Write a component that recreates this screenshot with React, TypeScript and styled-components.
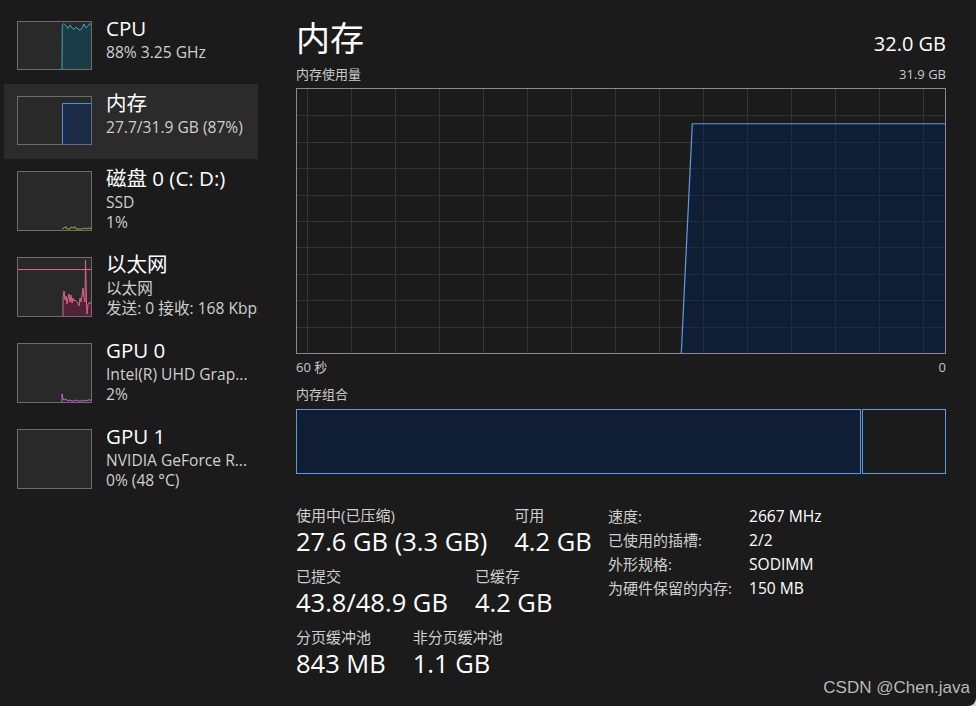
import React from "react";
import styled, { createGlobalStyle } from "styled-components";

const FONT = `"Open Sans", "Noto Sans CJK SC", sans-serif`;

const Global = createGlobalStyle`
  html, body { margin: 0; padding: 0; background: #d4d4d4; }
  body { font-family: ${FONT}; }
  * { box-sizing: border-box; }
`;

const Window = styled.div`
  position: relative;
  width: 976px;
  height: 706px;
  background: #1b1b1b;
  border-bottom-right-radius: 8px;
  overflow: hidden;
  display: grid;
  grid-template-columns: 296px 650px;
  font-family: ${FONT};
  color: #fff;
`;

const Sidebar = styled.nav`
  padding: 9px 38px 0 4px;
  display: flex;
  flex-direction: column;
`;

const NavRow = styled.div<{ $tall?: boolean; $active?: boolean }>`
  height: ${(p) => (p.$tall ? 86 : 75)}px;
  padding-left: 13px;
  display: flex;
  align-items: flex-start;
  gap: 14px;
  background: ${(p) => (p.$active ? "#2b2b2b" : "transparent")};
`;

const Thumb = styled.div<{ $tall?: boolean }>`
  flex: 0 0 75px;
  height: ${(p) => (p.$tall ? 60 : 49)}px;
  margin-top: 12px;
  border: 1px solid #6c6c6c;
  background: #292929;
  svg {
    display: block;
  }
`;

const NavText = styled.div`
  padding-top: 5px;
  width: 157px;
  overflow: hidden;
  white-space: nowrap;
`;

const NavTitle = styled.div`
  font-size: 20.5px;
  line-height: 28px;
  color: #fff;
`;

const NavSub = styled.div`
  font-size: 15.6px;
  line-height: 20px;
  color: #cfcfcf;
`;

const Main = styled.main`
  padding-top: 16px;
  display: flex;
  flex-direction: column;
`;

const HeaderRow = styled.div`
  height: 44px;
  display: flex;
  justify-content: space-between;
  align-items: baseline;
`;

const PageTitle = styled.h1`
  margin: 0;
  font-size: 34px;
  line-height: 44px;
  font-weight: 400;
`;

const Total = styled.div`
  font-size: 20px;
  line-height: 24px;
`;

const CaptionRow = styled.div<{ $mt: number }>`
  margin-top: ${(p) => p.$mt}px;
  display: flex;
  justify-content: space-between;
  font-size: 13px;
  line-height: 16px;
  color: #c9c9c9;
`;

const Graph = styled.div`
  margin-top: 6px;
  height: 266px;
  border: 1px solid #8a8a8a;
  svg {
    display: block;
  }
`;

const CompBar = styled.div`
  margin-top: 7px;
  height: 65px;
  display: flex;
`;

const Seg = styled.div<{ $fill?: boolean; $grow?: boolean }>`
  height: 100%;
  flex: ${(p) => (p.$grow ? "1 1 auto" : "0 0 auto")};
  border: 1px solid #5b9be6;
  background: ${(p) => (p.$fill ? "#0f1e35" : "transparent")};
`;

const SegGap = styled.div`
  flex: 0 0 1px;
`;

const Stats = styled.div`
  margin-top: 30px;
  display: grid;
  grid-template-columns: 312px 1fr;
  align-items: start;
`;

const StatCol = styled.div`
  padding-top: 0.5px;
  display: flex;
  flex-direction: column;
  gap: 9px;
`;

const StatRow = styled.div`
  display: flex;
  gap: 27px;
`;

const Stat = styled.div`
  display: flex;
  flex-direction: column;
`;

const StatLabel = styled.div`
  font-size: 15px;
  line-height: 20px;
  color: #cfcfcf;
`;

const StatValue = styled.div`
  font-size: 25.5px;
  line-height: 32px;
  color: #fff;
`;

const Specs = styled.dl`
  margin: 0;
  display: grid;
  grid-template-columns: 141px 1fr;
  grid-auto-rows: 24px;
  align-content: start;
  font-size: 15px;
  line-height: 24px;
`;

const SpecKey = styled.dt`
  color: #cfcfcf;
`;

const SpecVal = styled.dd`
  margin: 0;
  font-size: 15.6px;
  color: #fff;
`;

const Watermark = styled.div`
  position: absolute;
  right: 6px;
  bottom: 8px;
  font-family: "Liberation Sans", "Noto Sans CJK SC", sans-serif;
  font-size: 17px;
  line-height: 20px;
  color: #b9b9b9;
`;

type ThumbKind = "cpu" | "mem" | "disk" | "eth" | "gpu0" | "gpu1";

const ThumbChart: React.FC<{ kind: ThumbKind; h: number }> = ({ kind, h }) => {
  const w = 73;
  if (kind === "cpu") {
    const pts =
      "44,47 44.3,3 46,1.5 48,4 50,6.5 52,3 54,6 56,7.5 58,5 60,7 62,8 64,6.5 66,2 68,6 70,4 72,1.5 73,3";
    return (
      <svg width={w} height={h} viewBox={`0 0 ${w} ${h}`}>
        <polygon points={`${pts} 73,47`} fill="#1b3c45" />
        <polyline points={pts} fill="none" stroke="#35a6cc" strokeWidth="1" />
      </svg>
    );
  }
  if (kind === "mem") {
    return (
      <svg width={w} height={h} viewBox={`0 0 ${w} ${h}`}>
        <polygon points="44,47 44,6 73,6 73,47" fill="#1b2b46" />
        <polyline points="44.5,47 44.5,6.5 73,6.5" fill="none" stroke="#4f8ee6" strokeWidth="1" />
      </svg>
    );
  }
  if (kind === "disk") {
    const pts =
      "44,57 46,56 48,54.5 49,57 52,57 53,55 55,56 57,54.5 58,57 62,57 64,57 66,56 68,57 70,56 73,56.5";
    return (
      <svg width={w} height={h} viewBox={`0 0 ${w} ${h}`}>
        <polyline points={pts} fill="none" stroke="#7fba3a" strokeWidth="1" />
      </svg>
    );
  }
  if (kind === "eth") {
    const pts =
      "45,58 45,40 46,33 47,42 48,38 49,46 50,40 51,36 52,44 53,37 54,45 55,40 56,43 57,42 58,43 59,44 60,45 61,48 62,40 63,44 64,37 65,30 66,40 67,44 67.5,2 68.5,44 69,56 70,46 71,45 72,44 73,46";
    return (
      <svg width={w} height={h} viewBox={`0 0 ${w} ${h}`}>
        <polygon points={`${pts} 73,58`} fill="#4f2536" />
        <line x1="0" y1="11.5" x2="73" y2="11.5" stroke="#e0608f" strokeWidth="1" />
        <polyline points={pts} fill="none" stroke="#e0608f" strokeWidth="1" />
      </svg>
    );
  }
  if (kind === "gpu0") {
    const pts =
      "44,58 44,50 45,55 46,56 48,55 50,57 52,56 54,57 56,57 58,56 60,57 62,57 64,57 66,56 68,57 70,56 73,56";
    return (
      <svg width={w} height={h} viewBox={`0 0 ${w} ${h}`}>
        <polygon points={`${pts} 73,58`} fill="#3a2540" />
        <polyline points={pts} fill="none" stroke="#c861d6" strokeWidth="1" />
      </svg>
    );
  }
  return <svg width={w} height={h} viewBox={`0 0 ${w} ${h}`} />;
};

const navItems: {
  kind: ThumbKind;
  title: string;
  lines: string[];
  active?: boolean;
}[] = [
  { kind: "cpu", title: "CPU", lines: ["88% 3.25 GHz"] },
  { kind: "mem", title: "内存", lines: ["27.7/31.9 GB (87%)"], active: true },
  { kind: "disk", title: "磁盘 0 (C: D:)", lines: ["SSD", "1%"] },
  { kind: "eth", title: "以太网", lines: ["以太网", "发送: 0 接收: 168 Kbps"] },
  { kind: "gpu0", title: "GPU 0", lines: ["Intel(R) UHD Grap...", "2%"] },
  { kind: "gpu1", title: "GPU 1", lines: ["NVIDIA GeForce R...", "0% (48 °C)"] },
];

const UsageGraph: React.FC = () => {
  const W = 648;
  const H = 264;
  const used = 27.7 / 31.9;
  const top = H * (1 - used);
  const vLines = Array.from({ length: 15 }, (_, k) => 10.5 + 44 * k);
  const hLines = Array.from({ length: 9 }, (_, k) => Math.round(26.4 * (k + 1)) + 0.5);
  return (
    <svg width={W} height={H} viewBox={`0 0 ${W} ${H}`}>
      {vLines.map((x) => (
        <line key={`v${x}`} x1={x} y1={0} x2={x} y2={H} stroke="#343434" strokeWidth="1" />
      ))}
      {hLines.map((y) => (
        <line key={`h${y}`} x1={0} y1={y} x2={W} y2={y} stroke="#343434" strokeWidth="1" />
      ))}
      <polygon
        points={`384.3,${H} 395.3,${top} ${W},${top} ${W},${H}`}
        fill="rgba(0,34,86,0.44)"
      />
      <polyline
        points={`384.3,${H} 395.3,${top} ${W},${top}`}
        fill="none"
        stroke="#5b9be6"
        strokeWidth="1.2"
      />
    </svg>
  );
};

export default function App() {
  const inUsePx = Math.ceil(650 * (27.7 / 31.9));
  return (
    <>
      <Global />
      <Window>
        <Sidebar>
          {navItems.map((item) => {
            const tall = item.lines.length > 1;
            return (
              <NavRow key={item.kind} $tall={tall} $active={item.active}>
                <Thumb $tall={tall}>
                  <ThumbChart kind={item.kind} h={tall ? 58 : 47} />
                </Thumb>
                <NavText>
                  <NavTitle>{item.title}</NavTitle>
                  {item.lines.map((l) => (
                    <NavSub key={l}>{l}</NavSub>
                  ))}
                </NavText>
              </NavRow>
            );
          })}
        </Sidebar>
        <Main>
          <HeaderRow>
            <PageTitle>内存</PageTitle>
            <Total>32.0 GB</Total>
          </HeaderRow>
          <CaptionRow $mt={6}>
            <span>内存使用量</span>
            <span>31.9 GB</span>
          </CaptionRow>
          <Graph>
            <UsageGraph />
          </Graph>
          <CaptionRow $mt={5}>
            <span>60 秒</span>
            <span>0</span>
          </CaptionRow>
          <CaptionRow $mt={11}>
            <span>内存组合</span>
          </CaptionRow>
          <CompBar>
            <Seg $fill style={{ width: `${inUsePx}px` }} />
            <SegGap />
            <Seg $grow />
          </CompBar>
          <Stats>
            <StatCol>
              <StatRow>
                <Stat>
                  <StatLabel>使用中(已压缩)</StatLabel>
                  <StatValue>27.6 GB (3.3 GB)</StatValue>
                </Stat>
                <Stat>
                  <StatLabel>可用</StatLabel>
                  <StatValue>4.2 GB</StatValue>
                </Stat>
              </StatRow>
              <StatRow>
                <Stat>
                  <StatLabel>已提交</StatLabel>
                  <StatValue>43.8/48.9 GB</StatValue>
                </Stat>
                <Stat>
                  <StatLabel>已缓存</StatLabel>
                  <StatValue>4.2 GB</StatValue>
                </Stat>
              </StatRow>
              <StatRow>
                <Stat>
                  <StatLabel>分页缓冲池</StatLabel>
                  <StatValue>843 MB</StatValue>
                </Stat>
                <Stat>
                  <StatLabel>非分页缓冲池</StatLabel>
                  <StatValue>1.1 GB</StatValue>
                </Stat>
              </StatRow>
            </StatCol>
            <Specs>
              <SpecKey>速度:</SpecKey>
              <SpecVal>2667 MHz</SpecVal>
              <SpecKey>已使用的插槽:</SpecKey>
              <SpecVal>2/2</SpecVal>
              <SpecKey>外形规格:</SpecKey>
              <SpecVal>SODIMM</SpecVal>
              <SpecKey>为硬件保留的内存:</SpecKey>
              <SpecVal>150 MB</SpecVal>
            </Specs>
          </Stats>
        </Main>
        <Watermark>CSDN @Chen.java</Watermark>
      </Window>
    </>
  );
}
